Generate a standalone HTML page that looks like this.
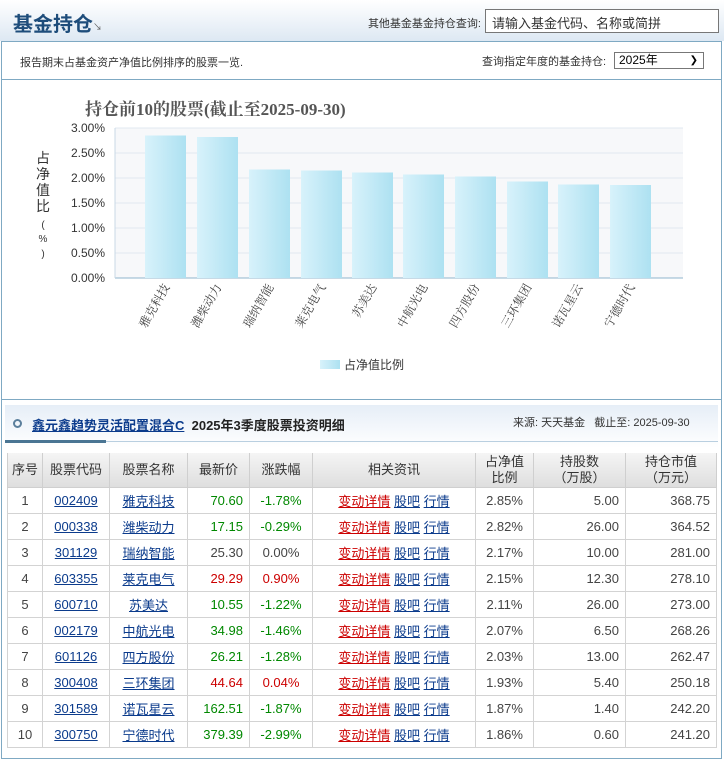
<!DOCTYPE html>
<html><head><meta charset="utf-8"><style>
*{margin:0;padding:0;box-sizing:border-box}
body{width:724px;height:761px;background:#fff;font-family:"Liberation Sans","Noto Sans CJK SC",sans-serif;font-size:12px;color:#333;position:relative;overflow:hidden}
.a{position:absolute}
a{color:#0b3b8c;text-decoration:underline}
table{border-collapse:collapse;position:absolute;left:7px;top:453px;width:710px;font-size:13px;color:#444}
th{height:34px;font-weight:normal;background:linear-gradient(#f5f5f5,#dedede);border:1px solid #cfcfcf;border-top:0;color:#333;line-height:16px}
td{height:26px;border:1px solid #d3d3d3;text-align:center;padding:0 6px}
td.r{text-align:right}
.g{color:#080}.rd{color:#c00}
.red{color:#c00}
</style></head><body>
<div class="a" style="left:0;top:0;width:724px;height:41px;background:linear-gradient(#fff,#dde8f3)"></div>
<div class="a" style="left:13px;top:8px;font-size:20px;font-weight:bold;color:#1e4d7b">基金持仓</div>
<div class="a" style="left:93px;top:20px;font-size:9px;color:#555">↘</div>
<div class="a" style="left:300px;top:15px;width:181px;text-align:right;font-size:11px;color:#333;white-space:nowrap">其他基金基金持仓查询:</div>
<div class="a" style="left:485px;top:9px;width:234px;height:24px;border:1px solid #777;background:#fff;font-size:13px;padding:3px 6px;color:#333">请输入基金代码、名称或简拼</div>
<div class="a" style="left:1px;top:41px;width:721px;height:359px;border:1px solid #7fa9c3"></div>
<div class="a" style="left:2px;top:79px;width:719px;height:1px;background:#7fa9c3"></div>
<div class="a" style="left:20px;top:54px;font-size:11px;color:#333">报告期末占基金资产净值比例排序的股票一览.</div>
<div class="a" style="left:482px;top:53px;font-size:11px;color:#333">查询指定年度的基金持仓:</div>
<div class="a" style="left:614px;top:52px;width:90px;height:17px;border:1px solid #777;font-size:12px;padding:0 4px;line-height:15px;color:#000">2025年<span style="position:absolute;right:5px;font-size:10px">❯</span></div>
<svg class="a" style="left:0;top:80px" width="724" height="320" font-family="Liberation Sans,Noto Sans CJK SC,sans-serif">
<defs><linearGradient id="b" x1="0" x2="1"><stop offset="0" stop-color="#d8f2fb"/><stop offset="1" stop-color="#ade1f1"/></linearGradient></defs>
<text x="85" y="35" font-family="Liberation Serif,Noto Serif CJK SC,serif" font-size="17" font-weight="bold" fill="#555">持仓前10的股票(截止至2025-09-30)</text>
<rect x="115" y="48" width="568" height="150" fill="#f7f8fa"/>
<g stroke="#e2e8f0"><line x1="115" x2="683" y1="48" y2="48"/><line x1="115" x2="683" y1="73" y2="73"/><line x1="115" x2="683" y1="98" y2="98"/><line x1="115" x2="683" y1="123" y2="123"/><line x1="115" x2="683" y1="148" y2="148"/><line x1="115" x2="683" y1="173" y2="173"/></g>
<line x1="115" x2="683" y1="198" y2="198" stroke="#8fb4cc"/><line x1="115" x2="115" y1="48" y2="198" stroke="#c8d8e6"/>
<g font-size="12" fill="#333" text-anchor="end"><text x="105" y="52">3.00%</text><text x="105" y="77">2.50%</text><text x="105" y="102">2.00%</text><text x="105" y="127">1.50%</text><text x="105" y="152">1.00%</text><text x="105" y="177">0.50%</text><text x="105" y="202">0.00%</text></g>
<g font-size="14" fill="#333" text-anchor="middle"><text x="43" y="83">占</text><text x="43" y="99">净</text><text x="43" y="115">值</text><text x="43" y="131">比</text><text x="43" y="148" font-size="10">(</text><text x="43" y="162" font-size="10">%</text><text x="43" y="177" font-size="10">)</text></g>
<g fill="url(#b)">
<rect x="145" y="55.5" width="41" height="142.5"/><rect x="197" y="57" width="41" height="141"/><rect x="249" y="89.5" width="41" height="108.5"/><rect x="301" y="90.5" width="41" height="107.5"/><rect x="352" y="92.5" width="41" height="105.5"/><rect x="403" y="94.5" width="41" height="103.5"/><rect x="455" y="96.5" width="41" height="101.5"/><rect x="507" y="101.5" width="41" height="96.5"/><rect x="558" y="104.5" width="41" height="93.5"/><rect x="610" y="105" width="41" height="93"/></g>
<g font-family="Liberation Serif,Noto Serif CJK SC,serif" font-size="12" fill="#444" text-anchor="end">
<text transform="translate(170,207) rotate(-60)">雅克科技</text><text transform="translate(222,207) rotate(-60)">潍柴动力</text><text transform="translate(274,207) rotate(-60)">瑞纳智能</text><text transform="translate(326,207) rotate(-60)">莱克电气</text><text transform="translate(377,207) rotate(-60)">苏美达</text><text transform="translate(428,207) rotate(-60)">中航光电</text><text transform="translate(480,207) rotate(-60)">四方股份</text><text transform="translate(532,207) rotate(-60)">三环集团</text><text transform="translate(583,207) rotate(-60)">诺瓦星云</text><text transform="translate(635,207) rotate(-60)">宁德时代</text></g>
<rect x="320" y="280" width="20" height="9" fill="url(#b)"/><text x="344" y="289" font-size="12" fill="#333">占净值比例</text>
</svg>
<div class="a" style="left:1px;top:400px;width:721px;height:359px;border:1px solid #7fa9c3;border-top:0"></div>
<div class="a" style="left:5px;top:405px;width:713px;height:43px;background:linear-gradient(#e6eef7,#fff)"></div>
<div class="a" style="left:5px;top:440px;width:101px;height:3px;background:#4a7593"></div>
<div class="a" style="left:106px;top:441px;width:612px;height:1px;background:#b9cfe0"></div>
<div class="a" style="left:13px;top:419px;width:9px;height:9px;border:2px solid #5b7f9c;border-radius:50%"></div>
<div class="a" style="left:32px;top:415px;font-size:13px;font-weight:bold;color:#222"><a href="#" style="color:#0b3b8c">鑫元鑫趋势灵活配置混合C</a>&nbsp; 2025年3季度股票投资明细</div>
<div class="a" style="left:513px;top:414px;font-size:11px;color:#333">来源: 天天基金 &nbsp; 截止至: 2025-09-30</div>
<table>
<tr><th style="width:35px">序号</th><th style="width:67px">股票代码</th><th style="width:78px">股票名称</th><th style="width:62px">最新价</th><th style="width:63px">涨跌幅</th><th style="width:163px">相关资讯</th><th style="width:58px">占净值<br>比例</th><th style="width:92px">持股数<br>（万股）</th><th>持仓市值<br>（万元）</th></tr>
<tr><td>1</td><td><a href="#">002409</a></td><td><a href="#">雅克科技</a></td><td class="r g">70.60</td><td class="g">-1.78%</td><td><a class="red" href="#">变动详情</a> <a href="#">股吧</a> <a href="#">行情</a></td><td>2.85%</td><td class="r">5.00</td><td class="r">368.75</td></tr>
<tr><td>2</td><td><a href="#">000338</a></td><td><a href="#">潍柴动力</a></td><td class="r g">17.15</td><td class="g">-0.29%</td><td><a class="red" href="#">变动详情</a> <a href="#">股吧</a> <a href="#">行情</a></td><td>2.82%</td><td class="r">26.00</td><td class="r">364.52</td></tr>
<tr><td>3</td><td><a href="#">301129</a></td><td><a href="#">瑞纳智能</a></td><td class="r">25.30</td><td>0.00%</td><td><a class="red" href="#">变动详情</a> <a href="#">股吧</a> <a href="#">行情</a></td><td>2.17%</td><td class="r">10.00</td><td class="r">281.00</td></tr>
<tr><td>4</td><td><a href="#">603355</a></td><td><a href="#">莱克电气</a></td><td class="r rd">29.29</td><td class="rd">0.90%</td><td><a class="red" href="#">变动详情</a> <a href="#">股吧</a> <a href="#">行情</a></td><td>2.15%</td><td class="r">12.30</td><td class="r">278.10</td></tr>
<tr><td>5</td><td><a href="#">600710</a></td><td><a href="#">苏美达</a></td><td class="r g">10.55</td><td class="g">-1.22%</td><td><a class="red" href="#">变动详情</a> <a href="#">股吧</a> <a href="#">行情</a></td><td>2.11%</td><td class="r">26.00</td><td class="r">273.00</td></tr>
<tr><td>6</td><td><a href="#">002179</a></td><td><a href="#">中航光电</a></td><td class="r g">34.98</td><td class="g">-1.46%</td><td><a class="red" href="#">变动详情</a> <a href="#">股吧</a> <a href="#">行情</a></td><td>2.07%</td><td class="r">6.50</td><td class="r">268.26</td></tr>
<tr><td>7</td><td><a href="#">601126</a></td><td><a href="#">四方股份</a></td><td class="r g">26.21</td><td class="g">-1.28%</td><td><a class="red" href="#">变动详情</a> <a href="#">股吧</a> <a href="#">行情</a></td><td>2.03%</td><td class="r">13.00</td><td class="r">262.47</td></tr>
<tr><td>8</td><td><a href="#">300408</a></td><td><a href="#">三环集团</a></td><td class="r rd">44.64</td><td class="rd">0.04%</td><td><a class="red" href="#">变动详情</a> <a href="#">股吧</a> <a href="#">行情</a></td><td>1.93%</td><td class="r">5.40</td><td class="r">250.18</td></tr>
<tr><td>9</td><td><a href="#">301589</a></td><td><a href="#">诺瓦星云</a></td><td class="r g">162.51</td><td class="g">-1.87%</td><td><a class="red" href="#">变动详情</a> <a href="#">股吧</a> <a href="#">行情</a></td><td>1.87%</td><td class="r">1.40</td><td class="r">242.20</td></tr>
<tr><td>10</td><td><a href="#">300750</a></td><td><a href="#">宁德时代</a></td><td class="r g">379.39</td><td class="g">-2.99%</td><td><a class="red" href="#">变动详情</a> <a href="#">股吧</a> <a href="#">行情</a></td><td>1.86%</td><td class="r">0.60</td><td class="r">241.20</td></tr>
</table>
</body></html>
